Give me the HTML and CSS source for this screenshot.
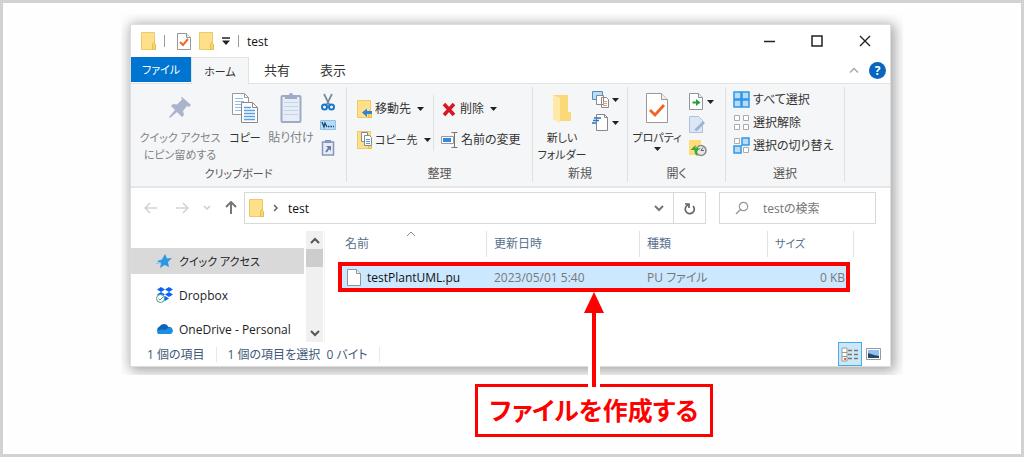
FILE: index.html
```html
<!DOCTYPE html>
<html lang="ja">
<head>
<meta charset="utf-8">
<title>test</title>
<link rel="stylesheet" href="styles.css">
</head>
<body>
<svg class="defs" aria-hidden="true">
  <symbol id="folder" viewBox="0 0 15 18"><path d="M.5.5h13v11l1 1v5H.5z" fill="#ffe08a" stroke="#ecca6c"/><path d="M11.500 17.500v-5l1-2 2 2v5z" fill="#fbd668" stroke="#e5bd52"/></symbol>
  <symbol id="caret" viewBox="0 0 7 4"><path d="M0 0h7L3.500 4z" fill="#222"/></symbol>
  <symbol id="page" viewBox="0 0 14 17"><path d="M.5.5h9l4 4v12H.5z" fill="#fff" stroke="#959595"/><path d="M9.500.5v4h4" fill="#eee" stroke="#959595"/></symbol>
</svg>
<main class="frame">
  <div class="stage">
    <section class="window">
      <header class="titlebar">
        <svg class="i15"><use href="#folder"/></svg>
        <i class="bar"></i>
        <button class="plain" aria-label="プロパティ"><svg width="14" height="17" viewBox="0 0 14 17"><use href="#page"/><path d="M3 9l3 3 5-6" fill="none" stroke="#ee6a25" stroke-width="2"/></svg></button>
        <button class="plain" aria-label="新しいフォルダー"><svg class="i15"><use href="#folder"/></svg></button>
        <button class="plain" aria-label="カスタマイズ"><svg width="8" height="8" viewBox="0 0 8 8"><path d="M0 1h8" stroke="#222" stroke-width="1.500"/><path d="M0 3.500h8L4 8z" fill="#222"/></svg></button>
        <i class="bar"></i>
        <h1>test</h1>
        <div class="controls">
          <button class="plain" aria-label="最小化"><svg width="12" height="12"><path d="M1 6.500h11" stroke="#222" stroke-width="1.500"/></svg></button>
          <button class="plain" aria-label="最大化"><svg width="12" height="12"><path d="M1 1h10v10H1z" fill="none" stroke="#222" stroke-width="1.500"/></svg></button>
          <button class="plain" aria-label="閉じる"><svg width="12" height="12"><path d="M1 1l10 10M11 1L1 11" stroke="#222" stroke-width="1.400"/></svg></button>
        </div>
      </header>
      <nav class="tabs">
        <button class="tab file">ファイル</button><button class="tab active">ホーム</button><button class="tab">共有</button><button class="tab">表示</button>
        <div class="tabtools">
          <button class="plain" aria-label="リボンを折りたたむ"><svg width="10" height="6"><path d="M1 5.500l4-4 4 4" fill="none" stroke="#aaa" stroke-width="1.500"/></svg></button>
          <button class="plain help" aria-label="ヘルプ">?</button>
        </div>
      </nav>
      <div class="ribbon">
        <section class="group clip">
          <div class="tools">
            <button class="big dim pin"><svg width="24" height="32" viewBox="0 0 24 32"><path d="M14 5l9 8-2 2-2-1-4 5 1 4-2 2-5-5-7 6-1-1 6-7-4-4 2-2 4 .5 5-5-1-2z" fill="#aab4cd"/></svg><span>クイック アクセス<br>にピン留めする</span></button>
            <button class="big copy"><svg width="26" height="32" viewBox="0 0 26 32"><path d="M.5 1.500h12l4 4v17H.5z" fill="#fff" stroke="#999"/><path d="M12.500 1.500v4h4" fill="none" stroke="#999"/><path d="M3 6.500h8M3 9.500h9M3 12.500h9M3 15.500h7M3 18.500h7" stroke="#8dbdec"/><path d="M9.500 10.500h11l5 5v15h-16z" fill="#fff" stroke="#888"/><path d="M20.500 10.500v5h5" fill="none" stroke="#888"/><path d="M12 15.500h7M12 18.500h11M12 21.500h11M12 24.500h11M12 27.500h11" stroke="#5a9ee5" stroke-width="1.500"/></svg><span>コピー</span></button>
            <button class="big dim paste"><svg width="24" height="32" viewBox="0 0 24 32"><rect x="2.500" y="4" width="19" height="26" rx="1" fill="#e7edf6" stroke="#9dabc8" stroke-width="2"/><path d="M6 3h4a2 2 0 014 0h4v4H6z" fill="#9dabc8"/><path d="M5 10.500h14M5 14.500h14M5 18.500h14M5 22.500h14" stroke="#c7d2e5"/></svg><span>貼り付け</span></button>
            <div class="mini">
              <button class="plain" aria-label="切り取り"><svg width="14" height="18" viewBox="0 0 14 18"><path d="M3 1l6 12M11 1L5 13" stroke="#7b8b99" stroke-width="1.700"/><circle cx="3.500" cy="14" r="2.500" fill="none" stroke="#1976c8" stroke-width="2"/><circle cx="10.500" cy="14" r="2.500" fill="none" stroke="#1976c8" stroke-width="2"/></svg></button>
              <button class="plain" aria-label="パスのコピー"><svg width="16" height="10"><path d="M.5.5h15v9H.5z" fill="#b7dcf8" stroke="#90c2e8"/><path d="M2 2l2 5 1-4 2 4" fill="none" stroke="#21466c" stroke-width="1.300"/><path d="M8 6.500h6" stroke="#21466c" stroke-width="1.500" stroke-dasharray="1.500 1"/></svg></button>
              <button class="plain" aria-label="ショートカットの貼り付け"><svg width="14" height="17"><path d="M1.500 3h11v13h-11z" fill="#e7edf6" stroke="#8697bb" stroke-width="1.500"/><path d="M4 1h6v3H4z" fill="#8697bb"/><path d="M5 13l3-4" stroke="#667ba8" stroke-width="1.800"/><path d="M5 7h5v5z" fill="#667ba8"/></svg></button>
            </div>
          </div>
          <h2 class="kana">クリップボード</h2>
        </section>
        <section class="group organize">
          <div class="tools">
            <div class="pairs">
              <button class="row"><svg width="15" height="18" viewBox="0 0 15 18"><use href="#folder"/><path d="M5 12.500l5-4v2.500h5v3h-5V17z" fill="#2d87d3"/></svg>移動先<svg class="caret"><use href="#caret"/></svg></button>
              <button class="row"><svg width="15" height="18" viewBox="0 0 15 18"><use href="#folder"/><path d="M4.500 1.500h6v9h-6z" fill="#fff" stroke="#888"/><path d="M7.500 4.500h5l2 2v8h-7z" fill="#fff" stroke="#888"/><path d="M9 8.500h4M9 10.500h4M9 12.500h4" stroke="#529be2"/></svg><span class="kana">コピー先</span><svg class="caret"><use href="#caret"/></svg></button>
            </div>
            <div class="pairs second">
              <button class="row"><svg width="16" height="16"><path d="M3 3l10 11M13 3L3 14" stroke="#dc1522" stroke-width="3.500"/></svg>削除<svg class="caret"><use href="#caret"/></svg></button>
              <button class="row"><svg width="17" height="16"><path d="M.5 4.500h12v7H.5z" fill="#fff" stroke="#999"/><path d="M2 6h8v4H2z" fill="#2d8be0"/><path d="M10.500.5h6M10.500 15.500h6M13.500.5v15" stroke="#777" fill="none"/></svg>名前の変更</button>
            </div>
          </div>
          <h2>整理</h2>
        </section>
        <section class="group create">
          <div class="tools">
            <button class="big newf"><svg width="22" height="32" viewBox="0 0 22 32"><path d="M2 3h15v17h3v9H10l-8-2z" fill="#fbd979"/><path d="M2 3l7 3v25l-7-4z" fill="#ffe9a6"/></svg><span>新しい<br>フォルダー</span></button>
            <div class="mini">
              <button class="plain" aria-label="新しいアイテム"><svg width="17" height="17"><path d="M.5.5h10v8H.5z" fill="#b9dcf7" stroke="#4d8fc5"/><path d="M4.500 4.500h7v9h-7zM9.500 6.500h5l2 2v8h-7z" fill="#fff" stroke="#888"/><path d="M11 10.500h4M11 12.500h4M11 14.500h4" stroke="#e09a88"/></svg><svg class="caret"><use href="#caret"/></svg></button>
              <button class="plain" aria-label="ショートカット"><svg width="17" height="17"><path d="M4.500.5h8l3 3v13h-11z" fill="#fff" stroke="#888"/><path d="M12.500.5v3h3" fill="none" stroke="#888"/><path d="M2 4h7M1 6.500h6M0 9h4" stroke="#2876c4" stroke-width="1.500"/></svg><svg class="caret"><use href="#caret"/></svg></button>
            </div>
          </div>
          <h2>新規</h2>
        </section>
        <section class="group open">
          <div class="tools">
            <button class="big prop"><svg width="24" height="32" viewBox="0 0 24 32"><path d="M1.500 1.500h15l6 6v23h-21z" fill="#fff" stroke="#999"/><path d="M16.500 1.500v6h6" fill="#eee" stroke="#999"/><path d="M5 18l5 5 9-10" fill="none" stroke="#f06421" stroke-width="2.800"/></svg><span>プロパティ</span><svg class="caret"><use href="#caret"/></svg></button>
            <div class="mini">
              <button class="plain" aria-label="開く"><svg width="15" height="17" viewBox="0 0 15 17"><use href="#page" width="14" height="17"/><path d="M3.500 8.500h3.500v-2.500l4.500 3.500-4.500 3.500v-2.500H3.500z" fill="#21a336"/></svg><svg class="caret"><use href="#caret"/></svg></button>
              <button class="plain" aria-label="編集"><svg width="16" height="17"><path d="M.5.5h9l4 4v12H.5z" fill="#dce7f5" stroke="#adc0dc"/><path d="M5 14l9-9 2 2-8 8z" fill="#9db3d6"/></svg></button>
              <button class="plain" aria-label="履歴"><svg width="18" height="18"><path d="M0 1h12v15H0z" fill="#ffdc77"/><circle cx="12" cy="11.500" r="5" fill="#e6e6e6" stroke="#8b8b8b" stroke-width="1.500"/><path d="M12 11.500l2-3M12 11.500h3" stroke="#666"/><path d="M1.500 11l5-5v3q5 0 5 1-5 1-3 7-3-1-3-6z" fill="#35a93c"/></svg></button>
            </div>
          </div>
          <h2>開く</h2>
        </section>
        <section class="group select">
          <div class="tools">
            <div class="stack">
              <button class="row"><svg width="17" height="17"><path d="M1 1h7v7H1zM9 1h7v7H9zM1 9h7v7H1zM9 9h7v7H9z" fill="#b5dcfb" stroke="#3097e5" stroke-width="1.500"/></svg>すべて選択</button>
              <button class="row"><svg width="17" height="17"><path d="M1.500 1.500h5v5h-5zM10.500 1.500h5v5h-5zM1.500 10.500h5v5h-5zM10.500 10.500h5v5h-5z" fill="#fff" stroke="#aaa"/></svg>選択解除</button>
              <button class="row"><svg width="17" height="17"><path d="M1.500 1.500h5v5h-5zM10.500 10.500h5v5h-5z" fill="#fff" stroke="#aaa"/><path d="M9 1h7v7H9zM1 9h7v7H1z" fill="#b5dcfb" stroke="#3097e5" stroke-width="1.500"/></svg>選択の切り替え</button>
            </div>
          </div>
          <h2>選択</h2>
        </section>
      </div>
      <div class="address">
        <button class="plain" aria-label="戻る"><svg width="14" height="12"><path d="M13 6H1M6 1L1 6l5 5" fill="none" stroke="#d2d2d2" stroke-width="1.500"/></svg></button>
        <button class="plain" aria-label="進む"><svg width="14" height="12"><path d="M1 6h12M8 1l5 5-5 5" fill="none" stroke="#d2d2d2" stroke-width="1.500"/></svg></button>
        <button class="plain" aria-label="履歴"><svg width="8" height="6"><path d="M1 1l3 3 3-3" fill="none" stroke="#ccc" stroke-width="1.500"/></svg></button>
        <button class="plain" aria-label="上へ"><svg width="12" height="14"><path d="M6 13V1M1 6l5-5 5 5" fill="none" stroke="#777" stroke-width="2"/></svg></button>
        <div class="path">
          <svg class="i15"><use href="#folder"/></svg>
          <svg width="6" height="8"><path d="M1 1l3 3-3 3" fill="none" stroke="#666" stroke-width="1.500"/></svg>
          <span class="crumb">test</span>
          <button class="plain" aria-label="以前の場所"><svg width="10" height="7"><path d="M1 1l4 4 4-4" fill="none" stroke="#777" stroke-width="2"/></svg></button>
          <button class="plain refresh" aria-label="更新"><svg width="12" height="13"><path d="M4 3a4.500 4.500 0 105 1M1 2h4v4" fill="none" stroke="#666" stroke-width="1.700"/></svg></button>
        </div>
        <label class="search"><svg width="14" height="14"><circle cx="8.500" cy="5.500" r="4.200" fill="none" stroke="#999" stroke-width="1.200"/><path d="M5.500 8.500L1 13" stroke="#999" stroke-width="1.500"/></svg><input type="search" placeholder="testの検索" aria-label="testの検索"></label>
      </div>
      <div class="content">
        <nav class="side">
          <a class="current" href="#"><svg width="17" height="16"><path d="M9 1l2 4.500 5-.5-4 4 1 5-4.500-2L4 15l1-4.500L1 8l5-1.500z" fill="#2e97e3"/><path d="M0 11l5-2" stroke="#7dbbea"/></svg><span class="kana">クイック アクセス</span></a>
          <a href="#"><svg width="17" height="16"><path d="M5 0l4 2.500L5 5 1 2.500zM13 0l4 2.500L13 5 9 2.500zM5 5l4 2.500L5 10 1 7.500zM13 5l4 2.500-4 2.500-4-2.500zM9 9l4 2.500L9 14l-4-2.500z" fill="#0b62f5"/><circle cx="4.500" cy="11.500" r="4" fill="#fff" stroke="#45a183"/><path d="M2.500 11.500L4 13l3-3" fill="none" stroke="#45a183"/></svg>Dropbox</a>
          <a href="#"><svg width="17" height="12"><path d="M4 11a4 4 0 01-.5-7.500 5 5 0 019 .5A3.500 3.500 0 0113.500 11z" fill="#0f62b8"/><path d="M2 11q-2-2 1-4 3-1 6 0l5-3q3 2 2.500 5-.5 2-3 2z" fill="#1d8fe0"/></svg>OneDrive - Personal</a>
        </nav>
        <div class="scroll">
          <button class="plain" aria-label="上にスクロール"><svg width="10" height="7"><path d="M1 6l4-4 4 4" fill="none" stroke="#555" stroke-width="2"/></svg></button>
          <i class="thumb"></i>
          <button class="plain" aria-label="下にスクロール"><svg width="10" height="7"><path d="M1 1l4 4 4-4" fill="none" stroke="#555" stroke-width="2"/></svg></button>
        </div>
        <div class="files">
          <table>
            <colgroup><col class="c1"><col class="c2"><col class="c3"><col></colgroup>
            <thead><tr>
              <th><span class="sorted">名前<svg class="sort" width="10" height="6"><path d="M1 5l4-4 4 4" fill="none" stroke="#888"/></svg></span></th>
              <th><span>更新日時</span></th><th><span>種類</span></th><th><span class="kana">サイズ</span></th>
            </tr></thead>
            <tbody><tr>
              <td class="name"><svg width="14" height="17"><use href="#page"/></svg>testPlantUML.pu</td>
              <td>2023/05/01 5:40</td><td>PU ファイル</td><td class="size">0 KB</td>
            </tr></tbody>
          </table>
        </div>
      </div>
      <footer class="status">
        <span>1 個の項目</span><span>1 個の項目を選択&nbsp; 0 バイト</span>
        <div class="views">
          <button class="plain on" aria-label="詳細"><svg width="18" height="15"><path d="M1 1h5v13H1zM1 5.500h5M1 9.500h5" fill="#fff" stroke="#999"/><path d="M3 12h2" stroke="#e46d4b" stroke-width="2"/><path d="M7 3.500h4M13 3.500h4M7 7.500h4M13 7.500h4M7 11.500h4M13 11.500h4" stroke="#777" stroke-width="1.500"/></svg></button>
          <button class="plain" aria-label="大アイコン"><svg width="15" height="12"><path d="M.5.5h14v11H.5z" fill="#fff" stroke="#999"/><path d="M2 2h11v8H2z" fill="#8fc1f7"/><path d="M2 5l6 2 5 1v2H2z" fill="#284867"/></svg></button>
        </div>
      </footer>
    </section>
  </div>
  <p class="callout"><svg class="arrow" width="22" height="95"><path d="M11 20v75" stroke="#fff" stroke-width="12"/><path d="M11 15v80" stroke="#f00" stroke-width="4"/><path d="M11 0l10 21H1z" fill="#f00"/></svg>ファイルを作成する</p>
</main>
</body>
</html>
```

FILE: styles.css
```css
* { box-sizing: border-box; }
body {
  margin: 0;
  color: #333;
  font: 12px/17px "Open Sans", "Noto Sans CJK JP", sans-serif;
  font-feature-settings: "palt";
}
button, input { font: inherit; font-feature-settings: inherit; color: inherit; }
button { padding: 0; border: 0; background: none; }
svg { display: block; flex: none; }
.defs { position: absolute; width: 0; height: 0; }
h1, h2, p { margin: 0; font-size: 12px; font-weight: 400; }
.plain { display: flex; align-items: center; justify-content: center; }
.i15 { width: 15px; height: 18px; }
.caret { width: 7px; height: 4px; }

.frame {
  min-height: 100vh;
  padding: 11px 118px 0;
  border: 3px solid #d2d2d2;
  background: #fefefe;
}
.stage { overflow: hidden; padding: 10px 12px 8px 9px; }
.window {
  border: 1px solid #ddd;
  background: #fff;
  box-shadow: 2px 2px 12px 2px rgba(0, 0, 0, .35);
}

.titlebar { display: flex; align-items: center; height: 32px; padding: 0 19px 0 10px; gap: 8px; }
.bar { width: 1px; height: 12px; background: #999; }
.titlebar .bar:first-of-type { margin-right: 4px; }
.titlebar h1 { color: #111; }
.controls { display: flex; gap: 36px; margin-left: auto; }

.tabs { display: flex; height: 27px; border-bottom: 1px solid #e0e2e4; }
.tab { width: 56px; font-size: 13px; }
.tab.file { width: 60px; height: 25px; color: #fff; background: #0074d1; font-size: 11px; }
.tab.active { width: 58px; height: 27px; border: 1px solid #e0e2e4; border-bottom: 0; background: #f5f6f7; font-size: 11px; }
.tabtools { display: flex; align-items: center; gap: 10px; margin-left: auto; padding-right: 4px; }
.help { width: 17px; height: 17px; border-radius: 50%; color: #fff; background: #0865c0; font-weight: 700; }

.ribbon { display: flex; height: 104px; border-bottom: 2px solid #e4e6e8; background: #f5f6f7; }
.group { display: flex; flex-direction: column; flex: none; margin: 3px 0 4px; border-right: 1px solid #dfe1e3; }
.group h2 { margin-top: auto; line-height: 16px; text-align: center; color: #555; }
.group .kana, .kana { font-size: 11px; }
.tools { display: flex; align-items: flex-start; padding-top: 1px; }
.big { display: flex; flex-direction: column; align-items: center; gap: 5px; padding-top: 4px; white-space: nowrap; font-size: 11px; line-height: 17px; }
.big .caret { margin-top: -4px; }
.dim { color: #808388; }
.mini { display: flex; flex-direction: column; }
.mini .plain { height: 23px; gap: 3px; justify-content: flex-start; }
.row { display: flex; align-items: center; gap: 3px; height: 23px; white-space: nowrap; }
.clip { width: 216px; }
.clip .tools { gap: 6px; padding-left: 7px; }
.clip .mini { padding-top: 2px; }
.clip .mini .plain { width: 16px; justify-content: center; }
.pin { width: 84px; }
.copy { width: 34px; }
.paste { width: 46px; font-size: 12px; }
.organize { width: 186px; }
.organize .tools { padding: 8px 0 0 10px; }
.pairs { display: grid; gap: 8px; justify-items: start; width: 76px; padding-top: 2px; }
.second { width: auto; padding-left: 7px; border-left: 1px solid #dfe1e3; }
.organize .row .caret { margin-left: 3px; }
.create { width: 95px; }
.create .tools { padding-left: 2px; gap: 3px; }
.newf { width: 54px; }
.open { width: 98px; }
.open .tools { padding-left: 5px; gap: 8px; }
.open .mini { padding-top: 2px; }
.prop { width: 48px; }
.select { width: 119px; }
.select .tools { padding: 1px 0 0 7px; }

.address { display: flex; align-items: center; padding: 4px 14px 0 13px; }
.address > .plain { width: 14px; height: 32px; margin-right: 17px; }
.address > .plain:nth-child(3) { width: 10px; margin-right: 12px; margin-left: -4px; }
.address > .plain:nth-child(4) { margin-right: 6px; }
.path { display: flex; flex: 1; align-items: center; gap: 9px; height: 32px; padding-left: 4px; border: 1px solid #d9d9d9; }
.crumb { flex: 1; color: #111; }
.refresh { width: 32px; height: 30px; border-left: 1px solid #d9d9d9; }
.search { display: flex; flex: 0 0 157px; align-items: center; gap: 14px; height: 32px; margin-left: 13px; padding-left: 15px; border: 1px solid #d9d9d9; }
.search input { width: 100px; min-width: 0; padding: 0; border: 0; outline: 0; background: none; }
.search input::placeholder { color: #757575; }

.content { display: flex; padding-top: 7px; }
.side { display: flex; flex-direction: column; gap: 8px; width: 173px; padding-top: 17px; }
.side a { display: flex; align-items: center; gap: 6px; height: 26px; padding-left: 25px; color: #222; text-decoration: none; white-space: nowrap; }
.side .current { background: #d9d9d9; }
.scroll { display: flex; flex-direction: column; width: 17px; margin-left: 2px; background: #f0f0f0; }
.scroll .plain { height: 18px; }
.thumb { height: 18px; margin-bottom: auto; background: #cdcdcd; }
.files { flex: 1; margin-left: 1px; padding: 0 40px 0 13px; border-left: 1px solid #f2f2f2; }
table { width: 100%; border-collapse: collapse; table-layout: fixed; }
.c1 { width: 149px; }
.c2 { width: 153px; }
.c3 { width: 128px; }
th, td { padding: 0; text-align: left; font-weight: 400; }
th { padding-bottom: 5px; color: #57708c; }
th span { display: block; height: 26px; padding-left: 7px; border-right: 1px solid #e2e2e2; line-height: 26px; }
th:last-child span { margin-right: -4px; }
.sorted { position: relative; }
.sort { position: absolute; top: 0; left: 46%; }
tbody tr { height: 30px; background: #cce8ff; outline: 4px solid #f00; outline-offset: -4px; }
td { padding-left: 7px; color: #777; white-space: nowrap; }
.name { display: flex; align-items: center; gap: 6px; height: 30px; padding-left: 9px; color: #111; }
td.size { padding-right: 5px; text-align: right; }

.status { display: flex; align-items: center; height: 24px; padding: 0 9px 0 5px; color: #41597a; }
.status > span { padding: 0 11px; border-right: 1px solid #e8e8e8; line-height: 15px; }
.views { display: flex; align-items: center; gap: 4px; margin-left: auto; }
.on { width: 24px; height: 24px; border: 1px solid #45aaf0; background: #cce8f8; }

.callout {
  position: relative;
  width: 238px;
  margin: 9px 0 0 354px;
  border: 3px solid #f00;
  background: #fff;
  color: #f00;
  font-size: 25px;
  font-weight: 700;
  line-height: 47px;
  text-align: center;
  white-space: nowrap;
}
.arrow { position: absolute; bottom: 100%; left: 50%; margin-left: -11px; }
```
